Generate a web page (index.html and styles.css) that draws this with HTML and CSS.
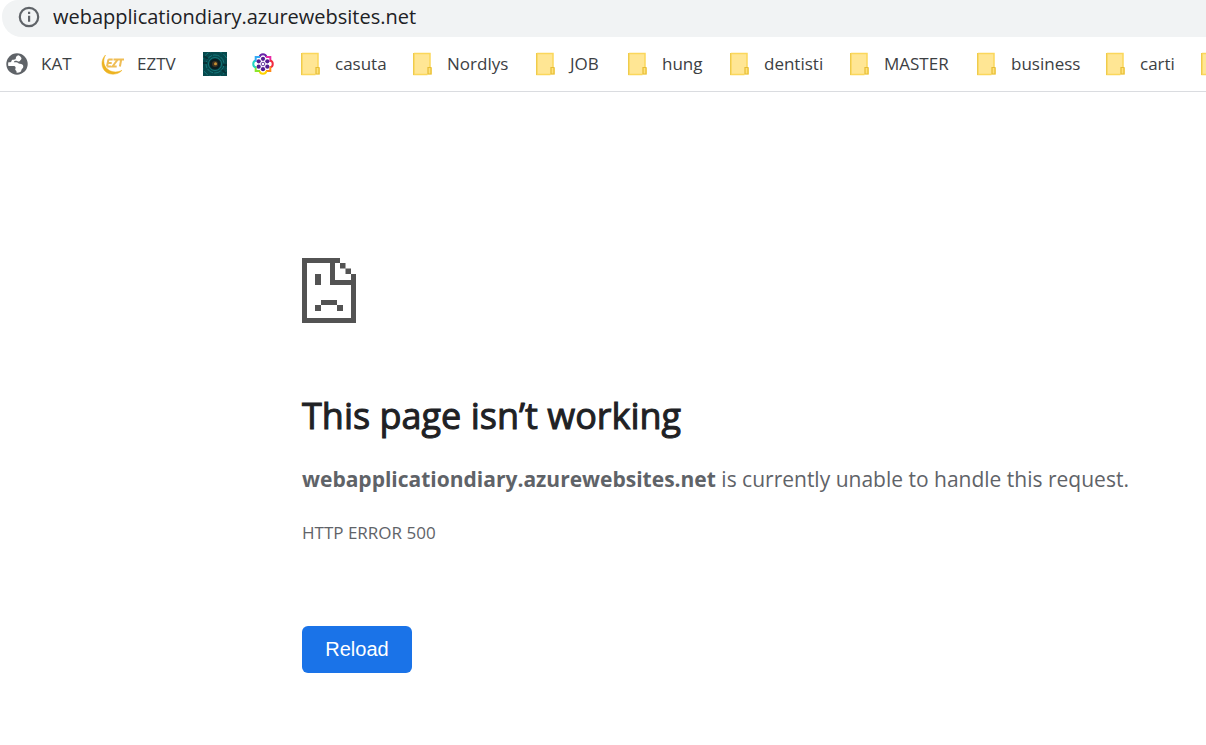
FILE: index.html
```html
<!DOCTYPE html>
<html lang="en">
<head>
<meta charset="utf-8">
<meta name="viewport" content="width=device-width, initial-scale=1">
<title>webapplicationdiary.azurewebsites.net</title>
<link rel="stylesheet" href="styles.css">
</head>
<body>
<svg width="0" height="0" class="defs" aria-hidden="true">
  <symbol id="folder" viewBox="0 0 24 24">
    <path d="M3 1h16v15h2v6.500H3z" fill="#ffe694"/>
    <path d="M3 1v21.500h13.500M3 1.500h16v14" fill="none" stroke="#fbd75b" stroke-width="1.500"/>
    <path d="M2.500 1v22" stroke="#eecb4d"/>
    <path d="M17 22v-6.500h3V22z" fill="#ffe27a" stroke="#e7bd35" stroke-width="1.200"/>
  </symbol>
</svg>
<header class="chrome">
  <form class="address">
    <svg class="info" viewBox="0 0 22 22" aria-hidden="true"><circle cx="11" cy="11" r="9.200" fill="none" stroke="#5f6368" stroke-width="2.200"/><path d="M10 9.800h2.200v6H10zM10 5.800h2.200V8H10z" fill="#5f6368"/></svg>
    <input class="url" type="text" aria-label="Address" value="webapplicationdiary.azurewebsites.net">
  </form>
  <nav class="bookmarks" aria-label="Bookmarks">
    <a href="#"><svg class="icon" viewBox="0 0 24 24" aria-hidden="true"><circle cx="12" cy="12" r="10.700" fill="#5f6368"/><path d="M13.500 3.300C11.500 3.800 10.800 5 10.800 6.500 10.500 8 9 7.500 7.500 7.800c-1 .2-.8 1.700-1.600 2.200-.7.400-1.600.2-2.500.2-.4 1.600-.3 2.700 0 3.800h5c1.500 0 2.200.6 2.200 1.700 0 1-.8 2 0 2.600.8.500 1 1 1 2.400 3.200.1 4.600-.9 4.800-2.700.2-1.200 1.900-1.500 1.900-3.200 0-2.200-1.500-3-3.500-3-1.700 0-1.700-1.500-3.500-1.500H8.800c.2-1.300 1.200-1.500 2.700-1.500 1.200 0 1.200.8 2.400.8 1.100 0 1.100-1.200 2-1.800 1.500-.9 0-3.500-2.400-4.500z" fill="#fff"/></svg><span>KAT</span></a>
    <a href="#"><svg class="icon" viewBox="0 0 24 24" aria-hidden="true"><path d="M4.500 3C-.5 8-.3 16.500 5.800 20.600c5 2.700 11.500 1.900 15.200-2.300-4.300 2.300-9 2.200-12.800 0C2.500 15 1.500 8.500 4.500 3z" fill="#edb321" stroke="#edb321" stroke-width=".5"/><path d="M7.400 7.500h4.300M6.700 11h4M6 14.500h4.300M7.400 7.500L6 14.500M12.500 7.500h4.200L11.500 14.500h4.200M17.500 7.500H23M20.200 7.500l-1.300 7" fill="none" stroke="#efbd55" stroke-width="2"/></svg><span>EZTV</span></a>
    <a href="#" aria-label="Eye"><svg class="icon" viewBox="0 0 24 24" aria-hidden="true"><path d="M0 0h24v24H0z" fill="#06484c"/><g fill="none" stroke="#14777a"><circle cx="12" cy="12" r="6.500"/><circle cx="12" cy="12" r="9" stroke-dasharray="7 1"/><circle cx="12" cy="12" r="13" stroke-dasharray="5 2"/></g><path d="M0 11h4M20 13h4M1 4l4 3M19 18l4 3" stroke="#073237" stroke-width="2"/><circle cx="12" cy="12" r="5.600" fill="#091e22"/><circle cx="12" cy="12" r="3" fill="#3f3322"/><circle cx="12.500" cy="11.800" r="1.500" fill="#c79235"/></svg></a>
    <a href="#" aria-label="Flower"><svg class="icon" viewBox="0 0 24 24" aria-hidden="true"><g fill="none" stroke-width="2"><path d="M8.500 5a3.600 3.600 0 0 1 7 0" stroke="#6821a8"/><path d="M15 5h4.300v4.500" stroke="#e82aa8"/><path d="M19 8.500a3.600 3.600 0 0 1 0 7" stroke="#f12b40"/><path d="M19.300 14.500V19H15" stroke="#ff8a18"/><path d="M15.500 19a3.600 3.600 0 0 1-7 0" stroke="#ffd400"/><path d="M9 19H4.700v-4.500" stroke="#8ee52b"/><path d="M5 15.500a3.600 3.600 0 0 1 0-7" stroke="#20d6c0"/><path d="M4.700 9.500V5H9" stroke="#33aaf4"/></g><g fill="#541e91"><circle cx="12" cy="6.800" r="2.100"/><circle cx="16.300" cy="9.300" r="2.100"/><circle cx="16.300" cy="14.700" r="2.100"/><circle cx="12" cy="17.200" r="2.100"/><circle cx="7.700" cy="14.700" r="2.100"/><circle cx="7.700" cy="9.300" r="2.100"/></g><circle cx="12" cy="12" r="1.800" fill="none" stroke="#6838a0"/></svg></a>
    <a href="#"><svg class="icon" aria-hidden="true"><use href="#folder"/></svg><span>casuta</span></a>
    <a href="#"><svg class="icon" aria-hidden="true"><use href="#folder"/></svg><span>Nordlys</span></a>
    <a href="#"><svg class="icon" aria-hidden="true"><use href="#folder"/></svg><span>JOB</span></a>
    <a href="#"><svg class="icon" aria-hidden="true"><use href="#folder"/></svg><span>hung</span></a>
    <a href="#"><svg class="icon" aria-hidden="true"><use href="#folder"/></svg><span>dentisti</span></a>
    <a href="#"><svg class="icon" aria-hidden="true"><use href="#folder"/></svg><span>MASTER</span></a>
    <a href="#"><svg class="icon" aria-hidden="true"><use href="#folder"/></svg><span>business</span></a>
    <a href="#"><svg class="icon" aria-hidden="true"><use href="#folder"/></svg><span>carti</span></a>
    <a href="#" aria-label="More"><svg class="icon" aria-hidden="true"><use href="#folder"/></svg></a>
  </nav>
</header>
<main class="error">
  <svg class="sad" viewBox="0 0 54 65" aria-hidden="true"><g fill="#535353"><path d="M0 0h38v5H33v17h16v-6h5v49H0zM5 5v55h44V27H28V5z" fill-rule="evenodd"/><path d="M38 5h5.500v5.500H38zM43.500 10.500H49V16h-5.500zM13 16h6v11h-6zM19 42h16v5H19zM13 47h6v6h-6zM35 47h6v6h-6z"/></g></svg>
  <h1>This page isn’t working</h1>
  <p class="message"><strong>webapplicationdiary.azurewebsites.net</strong> is currently unable to handle this request.</p>
  <p class="code">HTTP ERROR 500</p>
  <button class="reload" type="button">Reload</button>
</main>
</body>
</html>
```
FILE: styles.css
```css
* { box-sizing: border-box; }
body {
  margin: 0;
  background: #fff;
  font-family: "Open Sans", "Noto Sans", sans-serif;
  overflow-x: hidden;
}
.defs { position: absolute; }
.chrome { border-bottom: 1px solid #dadce0; overflow: hidden; }
.address {
  display: flex;
  align-items: center;
  gap: 13px;
  height: 37px;
  margin-left: 2px;
  padding: 0 0 4px 16px;
  background: #f1f3f4;
  border-radius: 16px 0 0 20px;
}
.info { width: 22px; height: 22px; flex: none; }
.url {
  flex: 1;
  min-width: 0;
  padding: 0;
  border: 0;
  outline: 0;
  background: none;
  color: #202124;
  font: 20px "Open Sans", "Noto Sans", sans-serif;
}
.bookmarks {
  display: grid;
  grid-template-columns: 96px 102px 48px 48px 112px 123px 92px 102px 120px 127px 129px 95px 24px;
  align-items: center;
  height: 54px;
  padding-left: 5px;
}
.bookmarks a {
  display: flex;
  align-items: center;
  gap: 12px;
  color: #3c4043;
  font-size: 17px;
  line-height: 24px;
  white-space: nowrap;
  text-decoration: none;
}
.icon { width: 24px; height: 24px; flex: none; }
.error {
  padding: 166px 24px 72px 302px;
  color: #5f6368;
}
.sad { display: block; width: 54px; height: 65px; }
h1 {
  margin: 68px 0 0;
  color: #202124;
  font-size: 36px;
  font-weight: 500;
  line-height: 50px;
  -webkit-text-stroke: 1px #202124;
}
p { margin: 0; }
.message { margin-top: 20px; font-size: 21px; line-height: 36px; white-space: nowrap; }
.code { margin-top: 23px; font-size: 17px; line-height: 26px; }
.reload {
  display: block;
  margin-top: 80px;
  width: 110px;
  height: 47px;
  padding: 0;
  border: 0;
  border-radius: 6px;
  background: #1a73e8;
  color: #fff;
  font: 20px "Liberation Sans", Arial, sans-serif;
}
```
